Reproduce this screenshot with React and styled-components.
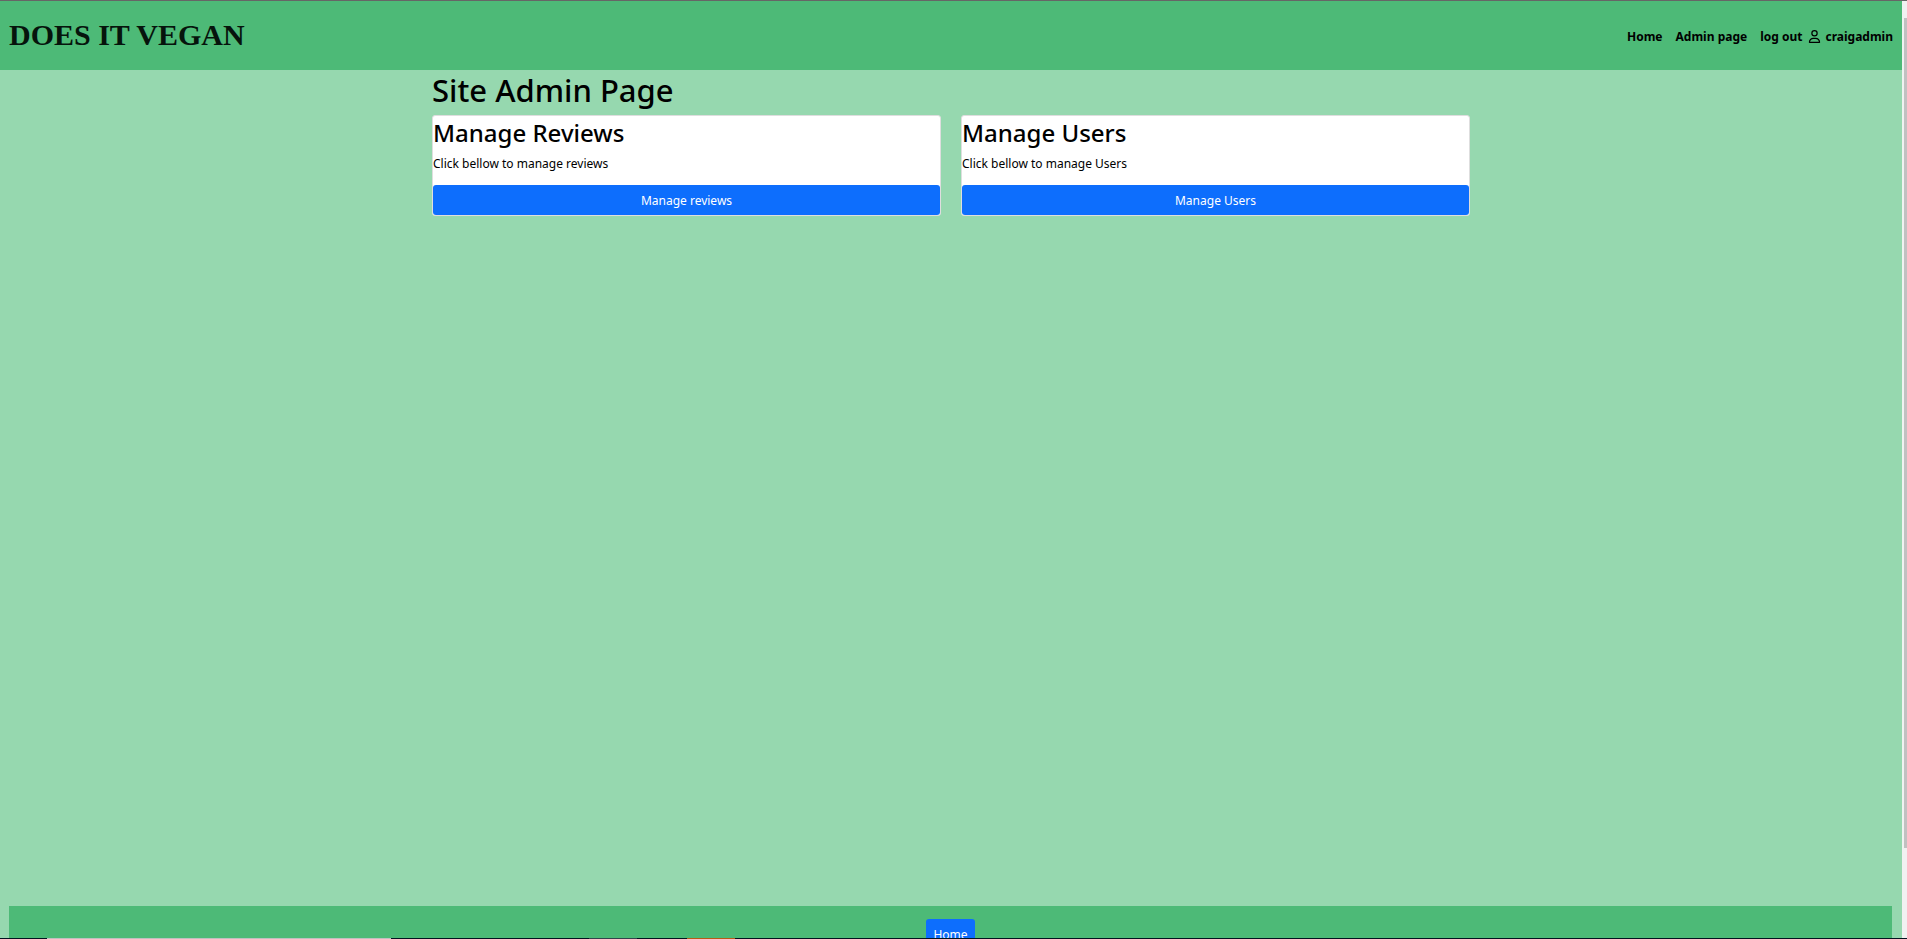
import React from 'react';
import styled, { createGlobalStyle } from 'styled-components';
import { FaRegUser } from 'react-icons/fa6';

const GlobalStyle = createGlobalStyle`
  *, *::before, *::after { box-sizing: border-box; }
  body {
    margin: 0;
    background: #96d8af;
    color: #000;
    font: 400 12px/20px "Noto Sans", "Open Sans", sans-serif;
  }
  h1, h2, p { margin: 0; }
`;

const Shell = styled.div`
  display: flex;
  flex-direction: column;
  height: 100vh;
  overflow: hidden;
  border-top: 1px solid #666;
`;

const Viewport = styled.div`
  display: flex;
  flex: 1;
  min-height: 0;
`;

const Page = styled.div`
  display: flex;
  flex-direction: column;
  flex: 1;
  min-width: 0;
`;

const Header = styled.header`
  display: flex;
  align-items: center;
  justify-content: space-between;
  height: 69px;
  padding: 0 9px;
  background: #4dba77;
`;

const Brand = styled.a`
  padding-bottom: 2px;
  color: #06140c;
  font: 700 30px/36px "Liberation Serif", serif;
  text-decoration: none;
`;

const Nav = styled.nav`
  display: flex;
  align-items: center;
  gap: 13px;
  padding-top: 2px;
  font-weight: 700;
`;

const NavLink = styled.a`
  color: #000;
  text-decoration: none;
`;

const Account = styled.span`
  display: flex;
  align-items: center;
  gap: 6px;
`;

const User = styled.span`
  display: flex;
  align-items: center;
  gap: 4px;
`;

const Main = styled.main`
  flex: 1;
  width: 100%;
  max-width: 1038px;
  margin: 0 auto;
`;

const Title = styled.h1`
  padding-top: 1px;
  margin-bottom: 5px;
  font-size: 31px;
  font-weight: 500;
  line-height: 39px;
`;

const Cards = styled.div`
  display: grid;
  grid-template-columns: 1fr 1fr;
  gap: 20px;
`;

const Card = styled.section`
  display: flex;
  flex-direction: column;
  border: 1px solid #dedede;
  border-radius: 3px;
  background: #fff;
`;

const CardTitle = styled.h2`
  padding-top: 1px;
  margin-bottom: 6px;
  font-size: 24px;
  font-weight: 500;
  line-height: 31px;
`;

const CardText = styled.p`
  margin-bottom: 11px;
`;

const Button = styled.button`
  height: 30px;
  padding: 1px 7px 0;
  border: 0;
  border-radius: 3px;
  background: #0d6efd;
  color: #fff;
  font: inherit;
`;

const Footer = styled.footer`
  display: flex;
  justify-content: center;
  align-items: flex-start;
  height: 32px;
  margin: 0 10px 0 9px;
  padding-top: 13px;
  overflow: hidden;
  background: #4dba77;
`;

const ScrollTrack = styled.div`
  width: 5px;
  padding: 17px 0 90px 2px;
  background: #f1f1f1;
`;

const ScrollThumb = styled.div`
  height: 100%;
  background: #c1c1c1;
`;

const Taskbar = styled.div`
  display: flex;
  height: 1px;
  padding-left: 47px;
  background: #03131f;
`;

const Task = styled.span`
  width: ${(p) => p.$width}px;
  background: ${(p) => p.$color};
`;

const sections = [
  { title: 'Manage Reviews', text: 'Click bellow to manage reviews', action: 'Manage reviews' },
  { title: 'Manage Users', text: 'Click bellow to manage Users', action: 'Manage Users' },
];

const tasks = [
  [344, '#c0c0c0'],
  [198, 'transparent'],
  [48, '#33434b'],
  [50, 'transparent'],
  [48, '#b75b16'],
];

export default function App() {
  return (
    <Shell>
      <GlobalStyle />
      <Viewport>
        <Page>
          <Header>
            <Brand href="#home">DOES IT VEGAN</Brand>
            <Nav>
              <NavLink href="#home">Home</NavLink>
              <NavLink href="#admin">Admin page</NavLink>
              <Account>
                <NavLink href="#logout">log out</NavLink>
                <User>
                  <FaRegUser size={13} aria-hidden="true" />
                  craigadmin
                </User>
              </Account>
            </Nav>
          </Header>
          <Main>
            <Title>Site Admin Page</Title>
            <Cards>
              {sections.map((s) => (
                <Card key={s.title}>
                  <CardTitle>{s.title}</CardTitle>
                  <CardText>{s.text}</CardText>
                  <Button type="button">{s.action}</Button>
                </Card>
              ))}
            </Cards>
          </Main>
          <Footer>
            <Button type="button">Home</Button>
          </Footer>
        </Page>
        <ScrollTrack>
          <ScrollThumb />
        </ScrollTrack>
      </Viewport>
      <Taskbar>
        {tasks.map(([width, color], i) => (
          <Task key={i} $width={width} $color={color} />
        ))}
      </Taskbar>
    </Shell>
  );
}
